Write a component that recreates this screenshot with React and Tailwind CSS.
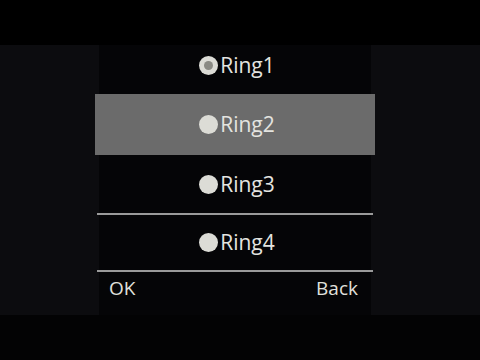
import React from "react";

function Dot({ selected }) {
  return (
    <span className="relative inline-block w-[19px] h-[19px] rounded-full bg-[#dcdcd6] mr-[2px] shrink-0">
      {selected && (
        <span className="absolute left-[5px] top-[5px] w-[9px] h-[9px] rounded-full bg-[#8a8a84]" />
      )}
    </span>
  );
}

function Item({ label, selected, className = "" }) {
  return (
    <div className={`flex items-center justify-center ${className}`}>
      <div className="flex items-center ml-[4px] text-[21px] leading-none text-[#e4e4e0]">
        <Dot selected={selected} />
        <span>{label}</span>
      </div>
    </div>
  );
}

export default function App() {
  return (
    <div
      className="w-[480px] h-[360px] bg-[#030304] flex flex-col overflow-hidden"
      style={{ fontFamily: '"Open Sans", "Noto Sans", sans-serif' }}
    >
      <div className="h-[45px] bg-black" />
      <div className="h-[270px] bg-[#0c0c0f] flex">
        <div className="ml-[99px] w-[272px] bg-[#050507] flex flex-col">
          <Item label="Ring1" selected className="h-[49px] pb-[9px]" />
          <Item label="Ring2" className="h-[61px] -mx-[4px] bg-[#6b6b6b]" />
          <Item label="Ring3" className="h-[58px]" />
          <div className="h-[2px] -mx-[2px] bg-[#9a9a9a]" />
          <Item label="Ring4" className="h-[55px]" />
          <div className="h-[2px] -mx-[2px] bg-[#9a9a9a]" />
          <div className="flex-1 flex items-center justify-between pl-[10px] pr-[13px] pb-[10px] text-[19px] text-[#e0e0dc]">
            <span>OK</span>
            <span>Back</span>
          </div>
        </div>
      </div>
      <div className="flex-1 bg-[#030304]" />
    </div>
  );
}
